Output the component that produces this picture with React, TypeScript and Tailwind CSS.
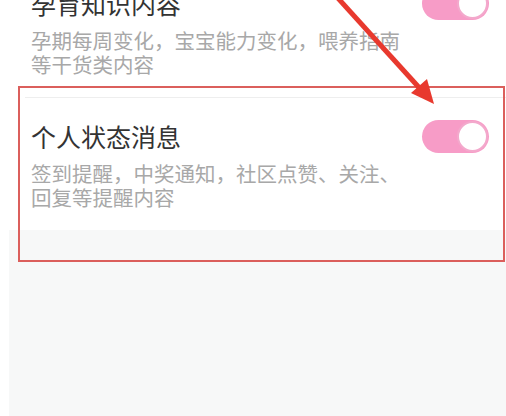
import React from "react";

type Item = { title: string; lines: string[]; divider: boolean };

const items: Item[] = [
  {
    title: "孕育知识内容",
    lines: ["孕期每周变化，宝宝能力变化，喂养指南", "等干货类内容"],
    divider: false,
  },
  {
    title: "个人状态消息",
    lines: ["签到提醒，中奖通知，社区点赞、关注、", "回复等提醒内容"],
    divider: true,
  },
];

function Toggle() {
  return (
    <div className="flex h-[33px] w-[67px] shrink-0 items-center justify-end rounded-full bg-[#f79cc7] p-[1px]">
      <div className="h-[31px] w-[31px] rounded-full border-[2px] border-[#f3a9cc] bg-white" />
    </div>
  );
}

function Row({ item }: { item: Item }) {
  return (
    <div className={item.divider ? "border-t border-[#eeeeee] ml-[25px]" : ""}>
      <div className={`pb-[21px] pr-[17px] ${item.divider ? "pt-[23px] pl-[6px]" : "pl-[31px]"}`}>
        <div className="flex h-[30px] items-center justify-between">
          <span className="text-[25px] leading-[30px] text-[#333333]">{item.title}</span>
          <Toggle />
        </div>
        <div className="mt-[10px] text-[20.5px] leading-[24px] text-[#a8a8a8]">
          {item.lines.map((l) => (
            <div key={l}>{l}</div>
          ))}
        </div>
      </div>
    </div>
  );
}

export default function App() {
  return (
    <div
      className="relative h-[416px] w-[506px] overflow-hidden bg-white"
      style={{ fontFamily: '"Noto Sans CJK SC", "Noto Sans", sans-serif' }}
    >
      <div className="-mt-[12px]">
        {items.map((it) => (
          <Row key={it.title} item={it} />
        ))}
      </div>
      <div className="ml-[9px] h-[200px] bg-[#f7f8f8]" />

      {/* highlight box */}
      <div className="absolute left-[18px] top-[86px] h-[176px] w-[487px] border-2 border-[#db5f5c]" />

      {/* arrow */}
      <svg className="absolute left-0 top-0" width="506" height="416" viewBox="0 0 506 416">
        <line x1="336" y1="-4" x2="424" y2="93" stroke="#e8392e" strokeWidth="5" />
        <polygon points="434,104 411,93 427,79" fill="#e8392e" />
      </svg>
    </div>
  );
}
